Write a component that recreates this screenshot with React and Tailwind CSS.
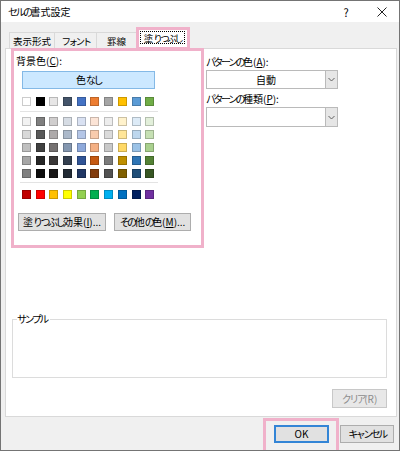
import React from "react";

const themeRow = ["#FFFFFF", "#000000", "#E7E6E6", "#44546A", "#4472C4", "#ED7D31", "#A5A5A5", "#FFC000", "#5B9BD5", "#70AD47"];
const tints = [
  ["#F2F2F2", "#7F7F7F", "#D0CECE", "#D6DCE4", "#D9E1F2", "#FCE4D6", "#EDEDED", "#FFF2CC", "#DDEBF7", "#E2EFDA"],
  ["#D9D9D9", "#595959", "#AEAAAA", "#ACB9CA", "#B4C6E7", "#F8CBAD", "#DBDBDB", "#FFE699", "#BDD7EE", "#C6E0B4"],
  ["#BFBFBF", "#404040", "#757171", "#8497B0", "#8EA9DB", "#F4B084", "#C9C9C9", "#FFD966", "#9BC2E6", "#A9D08E"],
  ["#A6A6A6", "#262626", "#3A3838", "#333F4F", "#305496", "#C65911", "#7B7B7B", "#BF8F00", "#2F75B5", "#548235"],
  ["#808080", "#0D0D0D", "#171616", "#222B35", "#203764", "#833C0C", "#525252", "#806000", "#1F4E78", "#375623"],
];
const stdRow = ["#C00000", "#FF0000", "#FFC000", "#FFFF00", "#92D050", "#00B050", "#00B0F0", "#0070C0", "#002060", "#7030A0"];

function Swatch({ c }) {
  return <div className="w-[9px] h-[9px] border border-black/20" style={{ backgroundColor: c }} />;
}

function SwatchRow({ colors }) {
  return (
    <div className="flex gap-x-[4.7px]">
      {colors.map((c, i) => (
        <Swatch key={i} c={c} />
      ))}
    </div>
  );
}

function Chevron() {
  return (
    <svg width="7" height="5" viewBox="0 0 7 5">
      <path d="M0.5 1 L3.5 4 L6.5 1" fill="none" stroke="#606060" strokeWidth="1" />
    </svg>
  );
}

// kana run, tightened to mimic proportional kana of the Windows UI font
function K({ children }) {
  return <span className="tracking-[-2.5px]">{children}</span>;
}

function U({ children }) {
  return <span className="underline underline-offset-1">{children}</span>;
}

function Dropdown({ children, h }) {
  return (
    <div className={`flex w-[132px] ${h} border border-[#bababa] bg-white`}>
      <div className="flex-1 flex items-center justify-center text-[10px] leading-[12px]">{children}</div>
      <div className="w-[12px] bg-[#e6e6e6] border-l border-[#bababa] flex items-center justify-center">
        <Chevron />
      </div>
    </div>
  );
}

function Btn({ className, children }) {
  return (
    <div className={`flex items-center justify-center whitespace-nowrap border border-[#adadad] bg-[#e1e1e1] text-[10px] leading-[12px] ${className}`}>
      {children}
    </div>
  );
}

export default function App() {
  return (
    <div className="relative w-[400px] h-[451px] overflow-hidden border border-[#747474] bg-[#f0f0f0] flex flex-col text-black font-['Noto_Sans_CJK_JP',sans-serif]">
      {/* Title bar */}
      <div className="h-[21px] bg-white flex items-center pl-[7px]">
        <span className="text-[10px] leading-[12px] whitespace-nowrap">
          <K>セルの</K>書式設定
        </span>
        <span className="ml-auto w-[10px] text-center text-[11px] leading-[12px]">?</span>
        <span className="ml-[26px] mr-[12px] flex">
          <svg width="10" height="10" viewBox="0 0 10 10">
            <path d="M0.5 0.5 L9.5 9.5 M9.5 0.5 L0.5 9.5" stroke="#222" strokeWidth="1" />
          </svg>
        </span>
      </div>

      {/* Tabs */}
      <div className="h-[26px] flex items-end pl-[8px] text-[9.5px] leading-[12px] whitespace-nowrap">
        <div className="w-[46px] h-[16px] border border-b-0 border-[#d9d9d9] bg-[#f0f0f0] flex items-center justify-center">表示形式</div>
        <div className="-ml-px w-[43px] h-[16px] border border-b-0 border-[#d9d9d9] bg-[#f0f0f0] flex items-center justify-center">
          <K>フォント</K>
        </div>
        <div className="-ml-px w-[41px] h-[16px] border border-b-0 border-[#d9d9d9] bg-[#f0f0f0] flex items-center justify-center">罫線</div>
        <div className="-ml-px relative z-10 -mb-px w-[53px] h-[21px] border border-b-0 border-[#d9d9d9] bg-white flex items-start justify-center pt-[2px]">
          <span className="w-[45px] h-[13px] border border-dotted border-black flex items-center justify-center">
            塗<K>りつぶし</K>
          </span>
        </div>
      </div>

      {/* Panel */}
      <div className="ml-[4px] w-[392px] h-[369px] border border-[#d9d9d9] bg-white flex flex-col">
        <div className="flex h-[200px]">
          {/* Left: background color */}
          <div className="w-[190px] pl-[10px] pt-[6px] flex flex-col text-[10px]">
            <div className="h-[12px] leading-[12px] whitespace-nowrap">
              背景色(<U>C</U>):
            </div>
            <div className="ml-[6px] mt-[4px] w-[133px] h-[18px] border border-[#84b9e6] bg-[#cce8ff] flex items-center justify-center leading-[12px]">
              色<K>なし</K>
            </div>
            <div className="ml-[6px] mt-[8px]">
              <SwatchRow colors={themeRow} />
            </div>
            <div className="ml-[4px] mt-[5px] w-[138px] h-px bg-[#e3e3e3]" />
            <div className="ml-[6px] mt-[5px] flex flex-col gap-y-[4px]">
              {tints.map((r, i) => (
                <SwatchRow key={i} colors={r} />
              ))}
            </div>
            <div className="ml-[4px] mt-[4px] w-[138px] h-px bg-[#e3e3e3]" />
            <div className="ml-[6px] mt-[7px]">
              <SwatchRow colors={stdRow} />
            </div>
            <div className="ml-[2px] mt-[14px] flex gap-[8px]">
              <Btn className="w-[88px] h-[18px]">
                塗<K>りつぶし</K>効果(<U>I</U>)...
              </Btn>
              <Btn className="w-[77px] h-[18px]">
                <K>その</K>他<K>の</K>色(<U>M</U>)...
              </Btn>
            </div>
          </div>

          {/* Right: pattern */}
          <div className="ml-[10px] pt-[7px] flex flex-col text-[10px]">
            <div className="h-[12px] leading-[12px] whitespace-nowrap">
              <K>パターンの</K>色(<U>A</U>):
            </div>
            <div className="mt-[2px]">
              <Dropdown h="h-[19px]">自動</Dropdown>
            </div>
            <div className="mt-[4px] h-[12px] leading-[12px] whitespace-nowrap">
              <K>パターンの</K>種類(<U>P</U>):
            </div>
            <div className="mt-[2px]">
              <Dropdown h="h-[20px]" />
            </div>
          </div>
        </div>

        {/* Sample */}
        <div className="relative ml-[6px] mt-[70px] w-[375px] h-[59px] border border-[#dcdcdc]">
          <span className="absolute left-[4px] -top-[7px] bg-white text-[10px] leading-[12px] pr-[3px] whitespace-nowrap">
            <K>サンプル</K>
          </span>
        </div>
        <div className="mt-[11px] mr-[9px] self-end w-[55px] h-[19px] border border-[#c8c8c8] bg-[#e8e8e8] flex items-center justify-center text-[10px] leading-[12px] text-[#8c8c8c] whitespace-nowrap">
          <K>クリア</K>(R)
        </div>
      </div>

      {/* Bottom buttons */}
      <div className="mt-[8px] flex justify-end pr-[5px] gap-[11px]">
        <div className="w-[55px] h-[18px] border-2 border-[#3385d6] bg-[#e1e1e1] flex items-center justify-center text-[10px] leading-[12px]">
          OK
        </div>
        <Btn className="w-[54px] h-[18px]">
          <K>キャンセル</K>
        </Btn>
      </div>

      {/* Pink highlight overlays */}
      <div className="pointer-events-none absolute left-[135px] top-[26px] w-[54px] h-[23px] border-[3px] border-[#f0b1ca] z-20" />
      <div className="pointer-events-none absolute left-[10px] top-[47px] w-[193px] h-[200px] border-[3px] border-[#f0b1ca] z-20" />
      <div className="pointer-events-none absolute left-[262px] top-[417px] w-[76px] h-[36px] border-[3px] border-[#f0b1ca] z-20" />
    </div>
  );
}
